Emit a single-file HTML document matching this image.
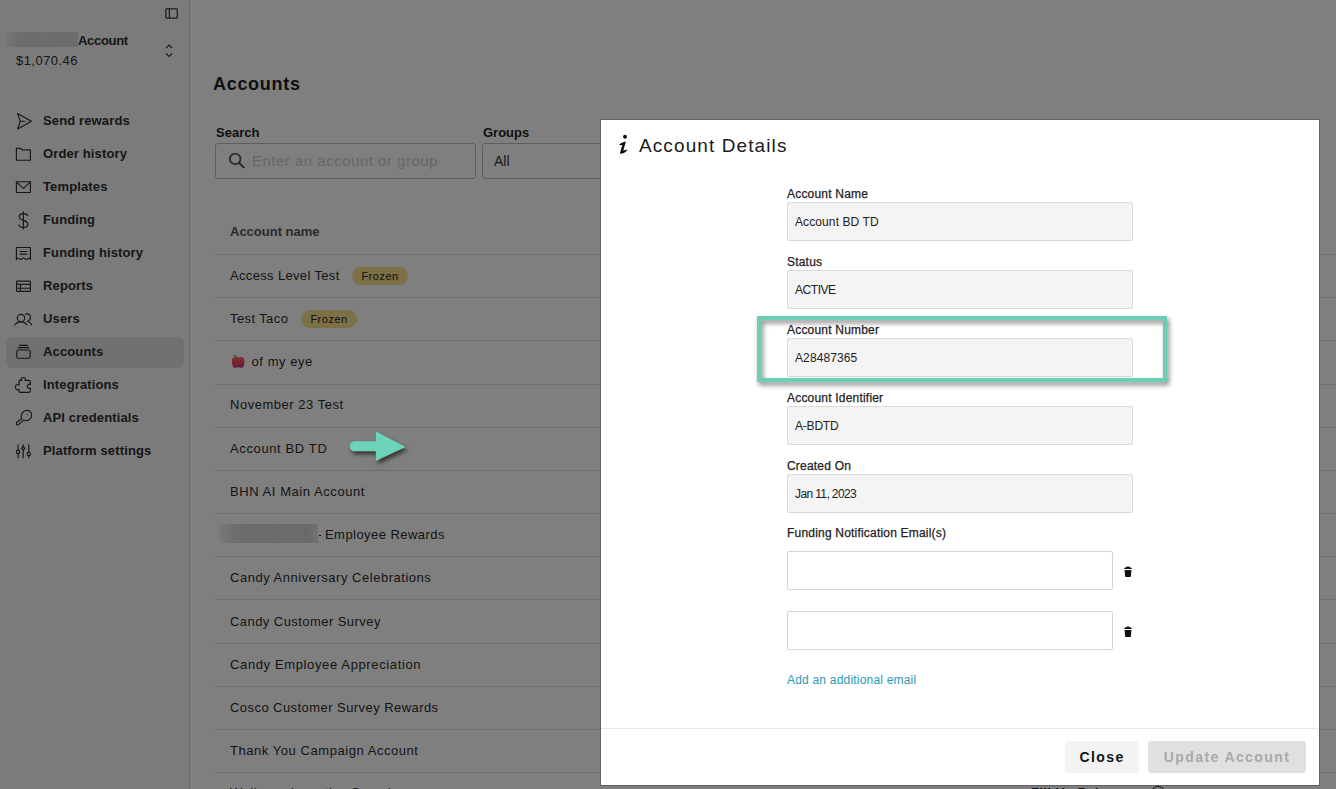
<!DOCTYPE html>
<html><head><meta charset="utf-8">
<style>
*{box-sizing:border-box;margin:0;padding:0}
html,body{width:1336px;height:789px;overflow:hidden;background:#fff;font-family:"Liberation Sans",sans-serif;color:#333}
.abs{position:absolute}
.t{position:absolute;line-height:1;white-space:nowrap}
#side{position:absolute;left:0;top:0;width:190px;height:789px;background:#f6f6f6;border-right:1px solid #d4d4d4}
.nav{position:absolute;left:43px;font-size:13px;font-weight:bold;color:#2e2e2e;line-height:1;white-space:nowrap;letter-spacing:0.13px}
.ic{position:absolute;left:12px;width:24px;height:24px}
.ic svg{width:24px;height:24px;display:block}
#main .row{position:absolute;left:215px;width:1121px;border-bottom:1px solid #dcdcdc}
.rt{position:absolute;left:230px;font-size:13px;letter-spacing:0.45px;color:#2b2b2b;line-height:1;white-space:nowrap}
.badge{position:absolute;height:18px;border-radius:9px;background:#f8e08e;font-size:11px;letter-spacing:0.5px;line-height:18px;color:#222;text-align:center}
#ov{position:absolute;left:0;top:0;width:1336px;height:789px;background:rgba(0,0,0,0.5)}
#modal{position:absolute;left:601px;top:120px;width:718px;height:665px;background:#fff;box-shadow:0 0 0 1px rgba(0,0,0,0.22)}
.lbl{position:absolute;left:186px;font-size:12px;color:#222;line-height:1;white-space:nowrap;letter-spacing:0.2px;-webkit-text-stroke:0.25px #222}
.inp{position:absolute;left:186px;width:346px;height:39px;background:#f4f4f4;border:1px solid #dadada;border-radius:2px}
.inp span{position:absolute;left:7px;top:13px;font-size:12px;line-height:1;color:#222;letter-spacing:0.1px;white-space:nowrap}
.em{position:absolute;left:186px;width:326px;height:39px;background:#fff;border:1px solid #d6d6d6;border-radius:2px}
.btn{position:absolute;top:621px;height:32px;border-radius:3px;font-size:14px;font-weight:bold;letter-spacing:1.4px;line-height:32px;text-align:center}
</style></head><body>
<div id="side">
  <!-- collapse icon -->
  <svg class="abs" style="left:164px;top:7px" width="16" height="14" viewBox="0 0 16 14"><rect x="1.9" y="1.8" width="11.4" height="9.4" rx="0.8" fill="none" stroke="#333" stroke-width="1.2"/><line x1="5.4" y1="1.8" x2="5.4" y2="11.2" stroke="#333" stroke-width="1.2"/></svg>
  <div class="abs" style="left:6px;top:32px;width:72px;height:15px;background:linear-gradient(90deg,#eeeeee 0%,#dadada 18%,#d8d8d8 40%,#dcdcdc 55%,#d6d6d6 85%,#d8d8d8 100%)"></div>
  <div class="t" style="left:78px;top:34px;font-size:13px;font-weight:bold;color:#2e2e2e;letter-spacing:-0.3px">Account</div>
  <div class="t" style="left:16px;top:54px;font-size:13px;color:#2e2e2e;letter-spacing:0.45px">$1,070.46</div>
  <svg class="abs" style="left:163px;top:43px" width="12" height="16" viewBox="0 0 12 16"><path d="M3 5 L6 2 L9 5" fill="none" stroke="#333" stroke-width="1.1"/><path d="M3 10.5 L6 13.5 L9 10.5" fill="none" stroke="#333" stroke-width="1.1"/></svg>
  <div class="abs" style="left:6px;top:337px;width:177.6px;height:30.5px;background:#e3e3e3;border-radius:6px"></div>
  <svg class="abs" style="left:0;top:0" width="190" height="789" viewBox="0 0 190 789"><path d="M17.6 113.6 L31.3 121.2 L17.6 128.9 L20.3 121.2 Z M20.3 121.2 L24.6 121.2" fill="none" stroke="#2e2e2e" stroke-width="1.15" stroke-linecap="round" stroke-linejoin="round"/><path d="M16.4 148.4 H20.6 L22 149.9 H30.4 V160.2 H16.4 Z" fill="none" stroke="#2e2e2e" stroke-width="1.15" stroke-linecap="round" stroke-linejoin="round"/><rect x="16.4" y="181.7" width="14" height="10.8" fill="none" stroke="#2e2e2e" stroke-width="1.15" stroke-linecap="round" stroke-linejoin="round"/><path d="M16.6 182.1 L23.4 188.4 L30.2 182.1" fill="none" stroke="#2e2e2e" stroke-width="1.15" stroke-linecap="round" stroke-linejoin="round"/><path d="M27.6 215.6 C27.2 214 25.6 213.6 23.4 213.6 C20.6 213.6 19.2 215 19.2 216.8 C19.2 218.8 21 219.7 23.4 220.4 C26 221.2 27.8 222 27.8 224.2 C27.8 226.2 26 227.4 23.4 227.4 C20.8 227.4 19.2 226.6 18.8 224.8 M23.4 211.8 V229" fill="none" stroke="#2e2e2e" stroke-width="1.15" stroke-linecap="round" stroke-linejoin="round"/><path d="M16.4 259.6 V247.5 H30.4 V259.6 C29.8 258.4 28.6 257.8 27.6 258.6 C26.8 259.4 26 259.8 25.2 259 C24 257.6 22.8 257.6 21.6 259 C20.8 259.8 20 259.4 19.2 258.6 C18.2 257.8 17 258.4 16.4 259.6 Z M20 251.5 H27 M20 254.1 H27" fill="none" stroke="#2e2e2e" stroke-width="1.15" stroke-linecap="round" stroke-linejoin="round"/><rect x="16.6" y="281.1" width="13.8" height="10.2" rx="0.6" fill="none" stroke="#2e2e2e" stroke-width="1.15" stroke-linecap="round" stroke-linejoin="round"/><path d="M16.6 284.4 H30.4 M16.6 288.2 H30.4 M20.4 284.4 V291.3" fill="none" stroke="#2e2e2e" stroke-width="1.15" stroke-linecap="round" stroke-linejoin="round"/><circle cx="21" cy="318" r="3.7" fill="none" stroke="#2e2e2e" stroke-width="1.15" stroke-linecap="round" stroke-linejoin="round"/><path d="M14.8 325 C16.2 322.6 18.4 321.8 21 321.8 C23.6 321.8 25.6 322.6 27 325" fill="none" stroke="#2e2e2e" stroke-width="1.15" stroke-linecap="round" stroke-linejoin="round"/><path d="M25.4 314.2 C26 314 26.6 313.9 27 313.9 C29 313.9 30.4 315.6 30.4 317.6 C30.4 319.4 29.2 320.8 27.6 321.2 C29.6 321.8 30.8 323 31.6 325" fill="none" stroke="#2e2e2e" stroke-width="1.15" stroke-linecap="round" stroke-linejoin="round"/><path d="M19.4 345.3 H27.6 M18.2 347.6 H28.8" fill="none" stroke="#2e2e2e" stroke-width="1.15" stroke-linecap="round" stroke-linejoin="round"/><rect x="16.8" y="350" width="13.4" height="8.2" rx="1.4" fill="none" stroke="#2e2e2e" stroke-width="1.15" stroke-linecap="round" stroke-linejoin="round"/><path d="M19.8 380.4 H21.6 C21 379.6 21 378.8 21.6 378.2 C22.4 377.2 24.2 377.2 25 378.2 C25.6 378.8 25.6 379.6 25 380.4 H28.6 C29.8 380.4 30.4 381 30.4 382 V384.6 C29.6 384 28.6 384 28 384.8 C27.2 385.6 27.2 387 28 387.8 C28.6 388.6 29.6 388.6 30.4 388 V390.8 C30.4 391.8 29.8 392.4 28.6 392.4 H20.6 C19.6 392.4 19 391.8 19 390.8 V389.4 C18.2 390 17 390 16.2 389.2 C15 388 15 386.4 16.2 385.2 C17 384.4 18.2 384.4 19 385 V381.6 C19 380.9 19.3 380.4 19.8 380.4 Z" fill="none" stroke="#2e2e2e" stroke-width="1.15" stroke-linecap="round" stroke-linejoin="round"/><path d="M21.6 418.8 C20.8 416.4 21.4 413.6 23.4 411.8 C25.8 409.6 29.4 410 31 412.6 C32.4 415 31.6 418.4 29 419.8 C27.2 420.8 25.2 420.8 23.6 420 L18.8 424.4 C18 425.2 16.6 425.2 16.4 424.2 C16.2 423.4 16.4 422.6 17 422 Z" fill="none" stroke="#2e2e2e" stroke-width="1.15" stroke-linecap="round" stroke-linejoin="round"/><circle cx="27.2" cy="414.4" r="0.6" fill="#2e2e2e"/><path d="M18.1 444.9 V450.2 M18.1 453.6 V457.8 M23.2 444.9 V446.6 M23.2 450 V457.8 M28.8 444.9 V452.3 M28.8 455.7 V457.8" fill="none" stroke="#2e2e2e" stroke-width="1.15" stroke-linecap="round" stroke-linejoin="round"/><circle cx="18.1" cy="451.9" r="1.7" fill="none" stroke="#2e2e2e" stroke-width="1.15" stroke-linecap="round" stroke-linejoin="round"/><path d="M23.2 446.5 L24.9 448.3 L23.2 450.1 L21.5 448.3 Z" fill="none" stroke="#2e2e2e" stroke-width="1.15" stroke-linecap="round" stroke-linejoin="round"/><circle cx="28.8" cy="454" r="1.7" fill="none" stroke="#2e2e2e" stroke-width="1.15" stroke-linecap="round" stroke-linejoin="round"/></svg><div class="nav" style="top:114px">Send rewards</div>
  <div class="nav" style="top:147px">Order history</div>
  <div class="nav" style="top:180px">Templates</div>
  <div class="nav" style="top:213px">Funding</div>
  <div class="nav" style="top:246px">Funding history</div>
  <div class="nav" style="top:279px">Reports</div>
  <div class="nav" style="top:312px">Users</div>
  <div class="nav" style="top:345px">Accounts</div>
  <div class="nav" style="top:378px">Integrations</div>
  <div class="nav" style="top:411px">API credentials</div>
  <div class="nav" style="top:444px">Platform settings</div>
</div>
<div id="main">
  <div class="t" style="left:213px;top:74.8px;font-size:18px;font-weight:bold;color:#1e1e1e;letter-spacing:0.7px">Accounts</div>
  <div class="t" style="left:216px;top:126px;font-size:13px;font-weight:bold;color:#222">Search</div>
  <div class="abs" style="left:215px;top:143px;width:261px;height:36px;border:1px solid #bdbdbd;border-radius:3px"></div>
  <svg class="abs" style="left:227px;top:151px" width="20" height="20" viewBox="0 0 20 20"><circle cx="8.2" cy="7.9" r="5.3" fill="none" stroke="#5a5a5a" stroke-width="1.9"/><path d="M12 11.8 L16.6 16.2" stroke="#5a5a5a" stroke-width="2.2" stroke-linecap="round"/></svg><div class="t" style="left:252px;top:153.3px;font-size:15px;color:#cdcdcd;letter-spacing:0.5px">Enter an account or group</div>
  <div class="t" style="left:483px;top:126px;font-size:13px;font-weight:bold;color:#222">Groups</div>
  <div class="abs" style="left:482px;top:143px;width:200px;height:36px;border:1px solid #bdbdbd;border-radius:3px"></div>
  <div class="t" style="left:494px;top:154px;font-size:14px;color:#333">All</div>
  <div class="t" style="left:230px;top:225px;font-size:13px;font-weight:bold;color:#555">Account name</div>
  <div class="abs" style="left:215px;top:297.17px;width:1121px;height:1px;background:#dddddd"></div><div class="abs" style="left:215px;top:340.34px;width:1121px;height:1px;background:#dddddd"></div><div class="abs" style="left:215px;top:383.51px;width:1121px;height:1px;background:#dddddd"></div><div class="abs" style="left:215px;top:426.68px;width:1121px;height:1px;background:#dddddd"></div><div class="abs" style="left:215px;top:469.85px;width:1121px;height:1px;background:#dddddd"></div><div class="abs" style="left:215px;top:513.02px;width:1121px;height:1px;background:#dddddd"></div><div class="abs" style="left:215px;top:556.19px;width:1121px;height:1px;background:#dddddd"></div><div class="abs" style="left:215px;top:599.36px;width:1121px;height:1px;background:#dddddd"></div><div class="abs" style="left:215px;top:642.53px;width:1121px;height:1px;background:#dddddd"></div><div class="abs" style="left:215px;top:685.70px;width:1121px;height:1px;background:#dddddd"></div><div class="abs" style="left:215px;top:728.87px;width:1121px;height:1px;background:#dddddd"></div><div class="abs" style="left:215px;top:772.04px;width:1121px;height:1px;background:#dddddd"></div><div class="abs" style="left:215px;top:815.21px;width:1121px;height:1px;background:#dddddd"></div><div class="abs" style="left:215px;top:254.00px;width:1121px;height:1px;background:#dddddd"></div><div class="rt" style="top:268.50px;letter-spacing:0.34px">Access Level Test</div><div class="rt" style="top:311.75px;letter-spacing:0.4px">Test Taco</div><svg class="abs" style="left:226px;top:350px" width="24" height="22" viewBox="226 350 24 22"><defs><linearGradient id="ap" x1="0" y1="0" x2="0" y2="1"><stop offset="0" stop-color="#ff6070"/><stop offset="0.55" stop-color="#ee4a5a"/><stop offset="1" stop-color="#c03a9a"/></linearGradient></defs><path d="M232.8 354.8 C234.6 354.4 236.6 354.9 238.4 357.4 L236.6 357.9 C234.8 357.6 233.4 356.6 232.8 354.8 Z" fill="#9ad040"/><path d="M238 357.6 C240.6 356.6 243.2 356.8 244 358.6 C244.8 360.6 244.6 364.2 243.6 366.2 C242.8 367.8 241.2 368.2 239.8 367.6 C238.8 367.2 237.6 367.2 236.6 367.6 C235 368.2 233.4 367.8 232.8 366.2 C231.8 364.2 231.6 360.6 232.4 358.6 C233.2 356.8 235.6 356.6 238 357.6 Z" fill="url(#ap)"/></svg><div class="rt" style="top:355.00px;left:251.5px;letter-spacing:0.56px">of my eye</div><div class="rt" style="top:398.25px;letter-spacing:0.53px">November 23 Test</div><div class="rt" style="top:441.50px;letter-spacing:0.62px">Account BD TD</div><div class="rt" style="top:484.75px;letter-spacing:0.56px">BHN AI Main Account</div><div class="abs" style="left:219px;top:524px;width:99px;height:19px;background:linear-gradient(90deg,#f2f2f2 0%,#dcdcdc 15%,#d6d6d6 35%,#dadada 55%,#d8d8d8 75%,#d4d4d4 90%,#e4e4e4 100%)"></div><div class="abs" style="left:318.5px;top:534.5px;width:2px;height:1.5px;background:#222"></div><div class="rt" style="top:528.00px;left:325px;letter-spacing:0.45px">Employee Rewards</div><div class="rt" style="top:571.25px;letter-spacing:0.52px">Candy Anniversary Celebrations</div><div class="rt" style="top:614.50px;letter-spacing:0.44px">Candy Customer Survey</div><div class="rt" style="top:657.75px;letter-spacing:0.63px">Candy Employee Appreciation</div><div class="rt" style="top:701.00px;letter-spacing:0.44px">Cosco Customer Survey Rewards</div><div class="rt" style="top:744.25px;letter-spacing:0.55px">Thank You Campaign Account</div><div class="rt" style="top:786.00px;letter-spacing:0.5px">Wellness Incentive Spend</div><div class="t" style="left:748px;top:786.5px;font-size:13px;color:#888;letter-spacing:0.5px">11/22/2023</div><div class="t" style="left:1031px;top:786.3px;font-size:13px;font-weight:bold;color:#222;letter-spacing:0.4px">Fill Up Balance</div><div class="abs" style="left:1150px;top:786px;width:16px;height:16px;border:1.5px solid #222;border-radius:50%"></div><div class="badge" style="left:352px;top:267px;width:56px">Frozen</div><div class="badge" style="left:301px;top:310px;width:56px">Frozen</div>
</div>
<div id="ov"></div>
<div id="modal"><svg class="abs" style="left:11px;top:10px" width="24" height="28" viewBox="612 130 24 28"><circle cx="625" cy="136.8" r="1.95" fill="#111"/><path d="M618.9 144.8 C620.6 143.3 623 142 625.9 141.5 L623.3 150.5 C624.7 149.9 626.1 149.5 627.5 149.7 C626.1 151.6 623.8 153.5 621.2 153.7 C620.3 153.7 619.9 153.2 620.1 152.4 L622.3 145.1 C621 145.3 620 145.3 618.9 144.8 Z" fill="#111"/></svg><div class="t" style="left:38px;top:15.5px;font-size:19px;color:#1a1a1a;letter-spacing:1.1px">Account Details</div><div class="lbl" style="top:67.5px">Account Name</div><div class="inp" style="top:82px"><span style="letter-spacing:0.1px">Account BD TD</span></div><div class="lbl" style="top:135.5px">Status</div><div class="inp" style="top:150px"><span style="letter-spacing:-0.45px">ACTIVE</span></div><div class="lbl" style="top:203.5px">Account Number</div><div class="inp" style="top:218px"><span style="letter-spacing:0.1px">A28487365</span></div><div class="lbl" style="top:271.5px">Account Identifier</div><div class="inp" style="top:286px"><span style="letter-spacing:-0.2px">A-BDTD</span></div><div class="lbl" style="top:339.5px">Created On</div><div class="inp" style="top:354px"><span style="letter-spacing:-0.62px">Jan 11, 2023</span></div><div class="lbl" style="top:407px">Funding Notification Email(s)</div><div class="em" style="top:431px"></div><svg class="abs" style="left:522px;top:446px" width="10" height="12" viewBox="0 0 10 12"><path d="M1 3 C1.4 1.6 3 1 5 1 C7 1 8.6 1.6 9 3 Z" fill="#111"/><path d="M3.6 1.3 C3.8 0.5 6.2 0.5 6.4 1.3" fill="none" stroke="#111" stroke-width="0.8"/><path d="M1.6 4 H8.4 L7.9 10.2 C7.8 10.7 7.3 11 6.7 11 H3.3 C2.7 11 2.2 10.7 2.1 10.2 Z" fill="#111"/></svg><div class="em" style="top:491px"></div><svg class="abs" style="left:522px;top:506px" width="10" height="12" viewBox="0 0 10 12"><path d="M1 3 C1.4 1.6 3 1 5 1 C7 1 8.6 1.6 9 3 Z" fill="#111"/><path d="M3.6 1.3 C3.8 0.5 6.2 0.5 6.4 1.3" fill="none" stroke="#111" stroke-width="0.8"/><path d="M1.6 4 H8.4 L7.9 10.2 C7.8 10.7 7.3 11 6.7 11 H3.3 C2.7 11 2.2 10.7 2.1 10.2 Z" fill="#111"/></svg><div class="t" style="left:186px;top:553.5px;font-size:12px;color:#2a9ab3;letter-spacing:0.2px">Add an additional email</div><div class="abs" style="left:0;top:608px;width:717px;height:1px;background:#e6e6e6"></div><div class="btn" style="left:464px;width:74px;background:#f3f3f3;color:#111">Close</div><div class="btn" style="left:547px;width:158px;background:#e0e0e0;color:#a9a9a9">Update Account</div></div>
<svg class="abs" style="left:340px;top:425px;filter:drop-shadow(2px 3px 2.2px rgba(0,0,0,0.6))" width="80" height="50" viewBox="340 425 80 50"><path d="M355 441.2 H375.8 V431.3 L405.6 446.9 L375.8 461.1 V451.3 H355 C352.2 451.3 349.8 449.1 349.8 446.2 C349.8 443.4 352.2 441.2 355 441.2 Z" fill="#6dd3ba"/></svg><div class="abs" style="left:757px;top:316px;width:410px;height:66px;border:4px solid #6dcdb5;filter:drop-shadow(2px 3px 2.5px rgba(0,0,0,0.5))"></div></body></html>
